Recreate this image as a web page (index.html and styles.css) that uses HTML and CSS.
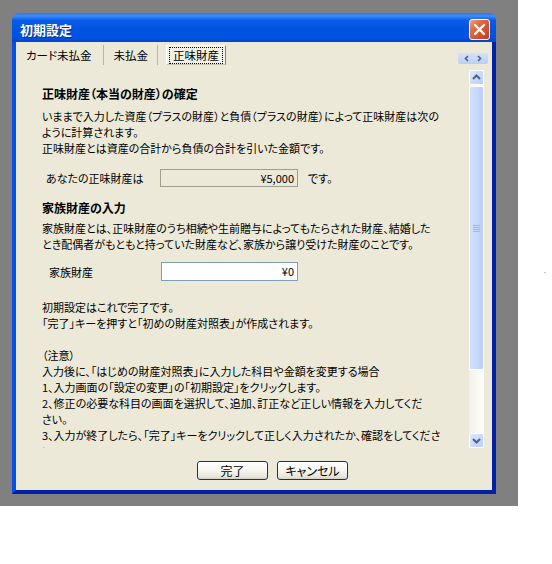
FILE: index.html
```html
<!DOCTYPE html>
<html lang="ja">
<head>
<meta charset="utf-8">
<title>初期設定</title>
<link rel="stylesheet" href="styles.css">
</head>
<body>
<div class="desktop">
  <div class="window">
    <div class="titlebar">
      <span class="title">初期設定</span>
      <div class="close">
        <svg width="21" height="21" viewBox="0 0 21 21"><path d="M6 6 L15 15 M15 6 L6 15" stroke="#fff" stroke-width="2.4" stroke-linecap="round"/></svg>
      </div>
    </div>
    <div class="frame">
      <div class="client">
        <div class="tabs">
          <div class="tab first">カード未払金</div>
          <div class="tab second">未払金</div>
          <div class="tab active"><span class="focus">正味財産</span></div>
          <div class="tabscroll">
            <svg width="30" height="11" viewBox="0 0 30 11"><path d="M10 3 L7.5 5.5 L10 8" fill="none" stroke="#4D6185" stroke-width="1.6"/><path d="M20 3 L22.5 5.5 L20 8" fill="none" stroke="#4D6185" stroke-width="1.6"/></svg>
          </div>
        </div>
        <div class="panel">
          <div class="content">
            <p class="head">正味財産（本当の財産）の確定</p>
            <p class="para">いままで入力した資産（プラスの財産）と負債（プラスの財産）によって正味財産は次の<br>ように計算されます。<br>正味財産とは資産の合計から負債の合計を引いた金額です。</p>
            <div class="field one">
              <span class="label">あなたの正味財産は</span>
              <span class="box readonly">¥5,000</span>
              <span class="suffix">です。</span>
            </div>
            <p class="head second-head">家族財産の入力</p>
            <p class="para">家族財産とは、正味財産のうち相続や生前贈与によってもたらされた財産、結婚した<br>とき配偶者がもともと持っていた財産など、家族から譲り受けた財産のことです。</p>
            <div class="field two">
              <span class="label">家族財産</span>
              <span class="box input">¥0</span>
            </div>
            <p class="para last">初期設定はこれで完了です。<br>「完了」キーを押すと「初めの財産対照表」が作成されます。<br><br>（注意）<br>入力後に、「はじめの財産対照表」に入力した科目や金額を変更する場合<br>1、入力画面の「設定の変更」の「初期設定」をクリックします。<br>2、修正の必要な科目の画面を選択して、追加、訂正など正しい情報を入力してくだ<br>さい。<br>3、入力が終了したら、「完了」キーをクリックして正しく入力されたか、確認をしてくださ<br>い。</p>
          </div>
          <div class="scrollbar">
            <div class="sbtn">
              <svg width="15" height="15" viewBox="0 0 15 15"><path d="M4 9 L7.5 5.5 L11 9" fill="none" stroke="#4D6185" stroke-width="2"/></svg>
            </div>
            <div class="thumb">
              <svg width="8" height="8" viewBox="0 0 8 8"><path d="M0 1.5 H7 M0 3.5 H7 M0 5.5 H7 M0 7.5 H7" stroke="#9fb8ee" stroke-width="1"/></svg>
            </div>
            <div class="track"></div>
            <div class="sbtn">
              <svg width="15" height="15" viewBox="0 0 15 15"><path d="M4 6 L7.5 9.5 L11 6" fill="none" stroke="#4D6185" stroke-width="2"/></svg>
            </div>
          </div>
        </div>
        <div class="buttons">
          <div class="btn">完了</div>
          <div class="btn">キャンセル</div>
        </div>
      </div>
    </div>
  </div>
</div>
<div class="speck"></div>
</body>
</html>
```
FILE: styles.css
```css
html, body {
  margin: 0;
  padding: 0;
  background: #ffffff;
}
body {
  font-family: "Noto Sans CJK JP", "Noto Sans", sans-serif;
  font-size: 11px;
  color: #000;
  font-feature-settings: "palt";
  position: relative;
  width: 552px;
  height: 564px;
  overflow: hidden;
}
.desktop {
  width: 518px;
  height: 506px;
  background: #808080;
  box-sizing: border-box;
  padding: 13px 0 0 12px;
}
.window {
  width: 484px;
  height: 481px;
  display: flex;
  flex-direction: column;
}
.titlebar {
  height: 29px;
  box-sizing: border-box;
  padding: 5px 6px 0 8px;
  display: flex;
  align-items: flex-start;
  border-radius: 7px 7px 0 0;
  background: linear-gradient(#2a72f0 0%, #3d8eff 10%, #0b5be8 25%, #0054e3 55%, #0052e0 85%, #0044cf 100%);
}
.title {
  color: #fff;
  font-weight: bold;
  font-size: 13px;
  line-height: 24px;
  height: 24px;
  text-shadow: 1px 1px 0 #0a2a8a;
  font-feature-settings: normal;
}
.close {
  margin-left: auto;
  margin-top: 1px;
  width: 21px;
  height: 21px;
  box-sizing: border-box;
  border: 1px solid #fff;
  border-radius: 3px;
  background: linear-gradient(135deg, #f0a080 0%, #e2673f 35%, #cc4a22 80%, #b43a18 100%);
  display: flex;
  align-items: center;
  justify-content: center;
}
.close svg { margin: -1px; }
.frame {
  flex: 1;
  display: flex;
  border-left: 4px solid #0a4ee6;
  border-right: 4px solid #0020a8;
  border-bottom: 4px solid #0020a8;
}
.client {
  flex: 1;
  background: #ece9d8;
  display: flex;
  flex-direction: column;
}
.tabs {
  height: 28px;
  display: flex;
  align-items: flex-start;
  padding-left: 10px;
  box-sizing: border-box;
  font-size: 11.5px;
}
.tab {
  height: 20px;
  margin-top: 3px;
  line-height: 20px;
  white-space: nowrap;
}
.tab.first {
  padding-right: 11px;
  border-right: 1px solid #b8b4a4;
}
.tab.second {
  padding: 0 9px 0 10px;
  border-right: 1px solid #b8b4a4;
}
.tab.active {
  margin-left: 8px;
  padding: 0 2px;
  height: 20px;
  border-left: 1px solid #ffffff;
  border-top: 1px solid #ffffff;
  border-right: 1px solid #8a8676;
  border-bottom: 1px solid #c9c5b6;
  box-sizing: border-box;
  background: #f2f0e6;
  display: flex;
  align-items: center;
}
.focus {
  border: 1px dotted #000;
  line-height: 15px;
  padding: 0 3px;
}
.tabscroll {
  margin-left: auto;
  margin-right: 4px;
  margin-top: 11px;
  width: 30px;
  height: 11px;
  background: linear-gradient(#d6e2fb, #bccef5);
  border-radius: 2px;
}
.tabscroll svg { display: block; }
.panel {
  height: 378px;
  display: flex;
}
.content {
  flex: 1;
  overflow: hidden;
  padding: 16px 0 0 26px;
  line-height: 16px;
  white-space: nowrap;
}
.head {
  margin: 0 0 6px;
  font-weight: bold;
  font-size: 12px;
}
.second-head { margin-top: 13px; margin-bottom: 4px; }
.para { margin: 0; }
.para.last { margin-top: 18px; }
.field {
  display: flex;
  align-items: center;
}
.field.one { margin-top: 13px; height: 18px; }
.field.two { margin-top: 10px; height: 19px; }
.field.one .label { margin-left: 4px; width: 114px; }
.field.two .label { margin-left: 7px; width: 112px; }
.box {
  box-sizing: border-box;
  text-align: right;
  padding-right: 3px;
  line-height: 16px;
}
.readonly {
  width: 138px;
  height: 18px;
  border: 1px solid #a09d92;
  background: #ece9d8;
}
.input {
  width: 137px;
  height: 19px;
  border: 1px solid #7f9db9;
  background: #fff;
  line-height: 17px;
}
.suffix { margin-left: 10px; }
.scrollbar {
  width: 15px;
  margin-right: 8px;
  display: flex;
  flex-direction: column;
  background: linear-gradient(90deg, #f3f1ea, #fefefb);
}
.sbtn {
  width: 15px;
  height: 15px;
  box-sizing: border-box;
  border-radius: 2px;
  border: 1px solid #ffffff;
  background: linear-gradient(135deg, #dde8fd, #b9cdf7);
  display: flex;
  align-items: center;
  justify-content: center;
}
.sbtn svg { margin: -1px; }
.thumb {
  height: 284px;
  margin-top: 1px;
  box-sizing: border-box;
  border: 1px solid #ffffff;
  border-radius: 2px;
  background: linear-gradient(90deg, #d3e0fd, #c6d7fc 60%, #b9cdf8);
  display: flex;
  align-items: center;
  justify-content: center;
}
.track { flex: 1; }
.buttons {
  flex: 1;
  display: flex;
  gap: 9px;
  padding: 13px 0 0 181px;
  align-items: flex-start;
  font-size: 12px;
}
.btn {
  width: 71px;
  height: 19px;
  box-sizing: border-box;
  border: 1px solid #003c74;
  border-radius: 3px;
  background: linear-gradient(#ffffff 0%, #f6f5f0 50%, #e8e6dc 85%, #d6d0c5 100%);
  text-align: center;
  line-height: 17px;
}
.speck {
  position: absolute;
  left: 544px;
  top: 272px;
  width: 2px;
  height: 1px;
  background: #c8c8c8;
}
```
